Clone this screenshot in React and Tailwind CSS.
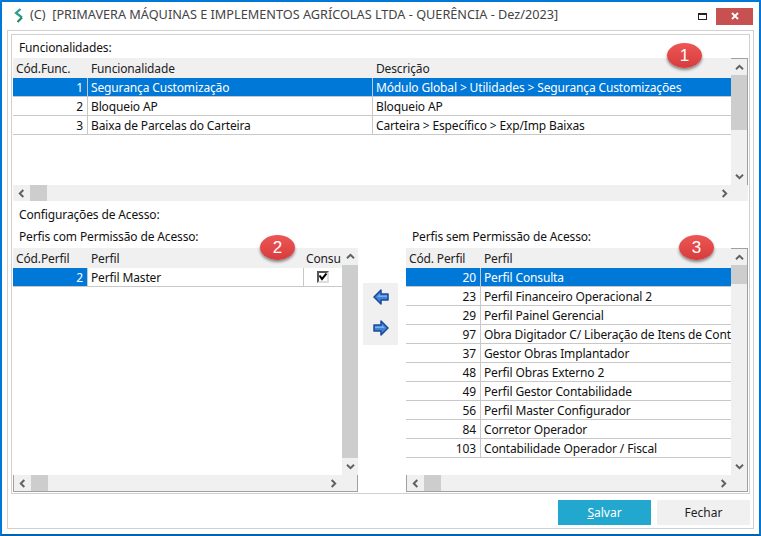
const FONT = "font-['Noto_Sans','Open_Sans',sans-serif]";

function Chevron({ dir }) {
  const points = {
    up: "1,6 5,2 9,6",
    down: "1,2 5,6 9,2",
    left: "6,1 2,5 6,9",
    right: "3,1 7,5 3,9",
  };
  const box = dir === "up" || dir === "down" ? "0 0 10 8" : "0 0 9 10";
  const size = dir === "up" || dir === "down" ? "w-[9px] h-[7px]" : "w-[8px] h-[9px]";
  return (
    <svg viewBox={box} className={size}>
      <polyline points={points[dir]} fill="none" stroke="#606060" strokeWidth="2.2" />
    </svg>
  );
}

function VScroll({ thumbHeight, framed }) {
  return (
    <div
      className={
        "shrink-0 bg-[#f0f0f0] flex flex-col items-center " +
        (framed ? "w-[17px] border-t border-r border-[#a0a0a0]" : "w-[16px]")
      }
    >
      <div className={(framed ? "h-[16px]" : "h-[17px]") + " w-full flex items-center justify-center shrink-0"}>
        <Chevron dir="up" />
      </div>
      <div className="w-full flex-1">
        <div className="w-full bg-[#cdcdcd]" style={{ height: thumbHeight }} />
      </div>
      <div className="h-[17px] w-full flex items-center justify-center shrink-0">
        <Chevron dir="down" />
      </div>
    </div>
  );
}

function HScroll({ framed }) {
  return (
    <div
      className={
        "shrink-0 bg-[#f0f0f0] flex items-center " +
        (framed ? "border-x border-b border-[#a0a0a0] h-[17px]" : "h-[16px]")
      }
    >
      <div className="w-[17px] flex items-center justify-center">
        <Chevron dir="left" />
      </div>
      <div className="w-[17px] h-full bg-[#cdcdcd]" />
      <div className="flex-1" />
      <div className="w-[17px] flex items-center justify-center">
        <Chevron dir="right" />
      </div>
      <div className="w-[16px]" />
    </div>
  );
}

function Row({ code, name, desc, selected, extra }) {
  return (
    <div className="h-[19px] flex text-[12px] tracking-[-0.14px] leading-[20px] border-b border-[#c8c8c8] text-[#111]">
      <div
        className={
          "w-[75px] shrink-0 text-right pr-[4px] border-r border-[#c8c8c8] " +
          (selected ? "bg-[#0078d7] text-white" : "")
        }
      >
        {code}
      </div>
      <div
        className={
          "pl-[3px] whitespace-nowrap overflow-hidden " +
          (desc !== undefined ? "w-[285px] shrink-0 border-r border-[#c8c8c8] " : "flex-1 ") +
          (selected && !extra ? "bg-[#0078d7] text-white" : "")
        }
      >
        {name}
      </div>
      {desc !== undefined && (
        <div className={"flex-1 pl-[3px] whitespace-nowrap " + (selected ? "bg-[#0078d7] text-white" : "")}>{desc}</div>
      )}
      {extra}
    </div>
  );
}

function Head({ children }) {
  return (
    <div className="h-[20px] flex bg-[#f0f0f0] text-[12px] tracking-[-0.14px] leading-[22px] text-[#222] shrink-0">
      {children}
    </div>
  );
}

function Badge({ n, className }) {
  return (
    <div
      className={
        "absolute w-[35px] h-[25px] rounded-[50%] bg-gradient-to-b from-[#ee5555] to-[#d63c3c] text-white text-[17px] leading-[25px] text-center font-['Liberation_Sans',sans-serif] shadow-[0_2px_3px_rgba(0,0,0,0.45)] " +
        className
      }
    >
      {n}
    </div>
  );
}

function BlockArrow({ flip }) {
  return (
    <svg viewBox="0 0 16 16" className={"w-[16px] h-[16px] " + (flip ? "-scale-x-100" : "")}>
      <polygon points="1,8 8,1 8,5 15,5 15,11 8,11 8,15" fill="#3f82d8" stroke="#1b4a98" strokeWidth="1.5" strokeLinejoin="round" />
      <polygon points="4,8 7,5 7,6.5 14,6.5 14,8" fill="#78b0ea" />
    </svg>
  );
}

const funcs = [
  ["1", "Segurança Customização", "Módulo Global > Utilidades > Segurança Customizações", true],
  ["2", "Bloqueio AP", "Bloqueio AP"],
  ["3", "Baixa de Parcelas do Carteira", "Carteira > Específico > Exp/Imp Baixas"],
];

const perfis = [
  ["20", "Perfil Consulta", true],
  ["23", "Perfil Financeiro Operacional 2"],
  ["29", "Perfil Painel Gerencial"],
  ["97", "Obra Digitador C/ Liberação de Itens de Contr"],
  ["37", "Gestor Obras Implantador"],
  ["48", "Perfil Obras Externo 2"],
  ["49", "Perfil Gestor Contabilidade"],
  ["56", "Perfil Master Configurador"],
  ["84", "Corretor Operador"],
  ["103", "Contabilidade Operador / Fiscal"],
];

const labelCls = "pl-[6px] text-[12px] tracking-[-0.14px] leading-[18px] text-[#111] shrink-0";

export default function App() {
  return (
    <div className={FONT + " relative w-[761px] h-[536px] bg-white border-2 border-[#0078d7] border-b-[#0063b1] flex flex-col overflow-hidden"}>
      {/* title bar */}
      <div className="h-[28px] flex items-center shrink-0 relative">
        <svg viewBox="0 0 10 15" className="ml-[12px] mb-[2px] w-[10px] h-[15px]">
          <path d="M6.5 1 L2 5 L8 9.5" fill="none" stroke="#2a9d8f" strokeWidth="2.2" />
          <path d="M8 9.5 L3.5 14" fill="none" stroke="#1f8a5f" strokeWidth="2.2" />
        </svg>
        <span className="ml-[6px] mb-[2px] text-[12.7px] text-[#444] whitespace-pre">
          (C)  [PRIMAVERA MÁQUINAS E IMPLEMENTOS AGRÍCOLAS LTDA - QUERÊNCIA - Dez/2023]
        </span>
        <div className="ml-auto mr-[6px] flex items-center">
          <div className="w-[9px] h-[7px] border border-t-2 border-[#222] mr-[9px]" />
          <div className="w-[37px] h-[17px] bg-[#c75050] flex items-center justify-center text-white">
            <svg viewBox="0 0 8 8" className="w-[8px] h-[8px]">
              <path d="M1 1 L7 7 M7 1 L1 7" stroke="white" strokeWidth="1.8" />
            </svg>
          </div>
        </div>
      </div>

      {/* outer frame */}
      <div className="ml-[5px] mr-[5px] h-[499px] border border-[#d0d0d0] pt-[3px] px-[3px] flex flex-col">
        <div className="h-[460px] border border-[#d0d0d0] px-[1px] pb-[1px] flex flex-col">
          <div className={labelCls + " h-[23px] pt-[4px]"}>Funcionalidades:</div>

          {/* funcionalidades */}
          <div className="h-[127px] flex shrink-0">
            <div className="flex-1 flex flex-col min-w-0">
              <Head>
                <div className="w-[75px] pl-[3px]">Cód.Func.</div>
                <div className="w-[285px] pl-[3px]">Funcionalidade</div>
                <div className="pl-[3px]">Descrição</div>
              </Head>
              {funcs.map(f => (
                <Row key={f[0]} code={f[0]} name={f[1]} desc={f[2]} selected={f[3]} />
              ))}
            </div>
            <VScroll thumbHeight={55} framed />
          </div>
          <HScroll />

          <div className={labelCls + " h-[23px] pt-[5px]"}>Configurações de Acesso:</div>

          <div className="flex flex-1 min-h-0">
            {/* com permissao */}
            <div className="w-[345px] shrink-0 flex flex-col">
              <div className={labelCls + " h-[24px] pt-[4px]"}>Perfis com Permissão de Acesso:</div>
              <div className="flex flex-1 min-h-0">
                <div className="flex-1 min-w-0 flex flex-col">
                  <Head>
                    <div className="w-[75px] pl-[3px]">Cód.Perfil</div>
                    <div className="w-[215px] pl-[3px]">Perfil</div>
                    <div className="flex-1 pl-[3px] overflow-hidden">Consu</div>
                  </Head>
                  <Row
                    code="2"
                    name="Perfil Master"
                    selected
                    extra={
                      <div className="w-[39px] shrink-0 border-l border-[#c8c8c8] flex items-center justify-center">
                        <div className="w-[12px] h-[12px] border-2 border-[#555] border-r-[#ddd] border-b-[#ddd] bg-white flex items-center justify-center">
                          <svg viewBox="0 0 8 8" className="w-[8px] h-[8px]">
                            <path d="M0.5 2.5 L3 6 L7.5 0.5" fill="none" stroke="#000" strokeWidth="2" />
                          </svg>
                        </div>
                      </div>
                    }
                  />
                </div>
                <VScroll thumbHeight={193} />
              </div>
              <HScroll framed />
            </div>

            {/* setas */}
            <div className="w-[48px] shrink-0 pt-[59px] pr-[8px] pl-[5px]">
              <div className="w-[35px] h-[62px] bg-[#f0f0f0] flex flex-col items-center pt-[6px] gap-[15px]">
                <BlockArrow />
                <BlockArrow flip />
              </div>
            </div>

            {/* sem permissao */}
            <div className="flex-1 min-w-0 flex flex-col">
              <div className={labelCls + " h-[24px] pt-[4px]"}>Perfis sem Permissão de Acesso:</div>
              <div className="flex flex-1 min-h-0">
                <div className="flex-1 min-w-0 flex flex-col">
                  <Head>
                    <div className="w-[75px] pl-[3px]">Cód. Perfil</div>
                    <div className="pl-[3px]">Perfil</div>
                  </Head>
                  {perfis.map(p => (
                    <Row key={p[0]} code={p[0]} name={p[1]} selected={p[2]} />
                  ))}
                </div>
                <VScroll thumbHeight={19} framed />
              </div>
              <HScroll framed />
            </div>
          </div>
        </div>

        {/* buttons */}
        <div className="flex justify-end gap-[6px] pt-[6px] text-[12px]">
          <div className="w-[93px] h-[25px] bg-[#22a7cf] text-white leading-[25px] text-center">
            <span className="underline">S</span>alvar
          </div>
          <div className="w-[93px] h-[25px] bg-[#f0f0f0] text-[#222] leading-[25px] text-center">Fechar</div>
        </div>
      </div>

      <Badge n="1" className="left-[665px] top-[41px]" />
      <Badge n="2" className="left-[258px] top-[233px]" />
      <Badge n="3" className="left-[677px] top-[233px]" />
    </div>
  );
}
